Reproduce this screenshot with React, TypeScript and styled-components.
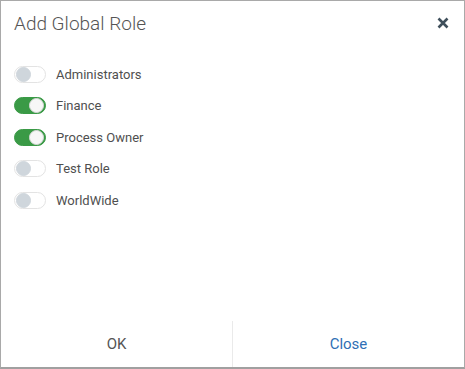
import React, { useState } from "react";
import styled, { createGlobalStyle } from "styled-components";

const GlobalStyle = createGlobalStyle`
  html, body {
    margin: 0;
    padding: 0;
    background: #ffffff;
  }
  body {
    font-family: Roboto, "Liberation Sans", Arial, sans-serif;
  }
`;

interface Role {
  name: string;
  enabled: boolean;
}

const initialRoles: Role[] = [
  { name: "Administrators", enabled: false },
  { name: "Finance", enabled: true },
  { name: "Process Owner", enabled: true },
  { name: "Test Role", enabled: false },
  { name: "WorldWide", enabled: false },
];

export default function App() {
  const [roles, setRoles] = useState<Role[]>(initialRoles);

  const toggle = (idx: number) => {
    setRoles(rs => rs.map((r, i) => (i === idx ? { ...r, enabled: !r.enabled } : r)));
  };

  return (
    <>
      <GlobalStyle />
      <Dialog>
        <Header>
          <Title>Add Global Role</Title>
          <CloseIcon aria-label="close">
            <svg width="12" height="12" viewBox="0 0 12 12">
              <path d="M1.5 1.5 L10.5 10.5 M10.5 1.5 L1.5 10.5" stroke="#3f4f5b" strokeWidth="2.6" strokeLinecap="butt" />
            </svg>
          </CloseIcon>
        </Header>
        <Body>
          {roles.map((role, i) => (
            <RoleRow key={role.name} onClick={() => toggle(i)}>
              <Switch $on={role.enabled}>
                <Knob $on={role.enabled} />
              </Switch>
              <RoleLabel>{role.name}</RoleLabel>
            </RoleRow>
          ))}
        </Body>
        <Footer>
          <FooterButton>OK</FooterButton>
          <FooterButton $primary>Close</FooterButton>
        </Footer>
      </Dialog>
    </>
  );
}

const Dialog = styled.div`
  width: 465px;
  height: 369px;
  box-sizing: border-box;
  border: 1px solid #a9a9a9;
  border-bottom: 2px solid #a0a0a0;
  display: flex;
  flex-direction: column;
  background: #fff;
`;

const Header = styled.div`
  display: flex;
  align-items: center;
  justify-content: space-between;
  height: 44px;
  padding: 0 15px 0 13px;
`;

const Title = styled.div`
  font-size: 19px;
  color: #555555;
  font-weight: 300;
`;

const CloseIcon = styled.div`
  display: flex;
  align-items: center;
  cursor: pointer;
`;

const Body = styled.div`
  flex: 1;
  display: flex;
  flex-direction: column;
  padding: 21px 13px 0 13px;
  gap: 15.6px;
`;

const RoleRow = styled.div`
  display: flex;
  align-items: center;
  gap: 10px;
  height: 16px;
  cursor: pointer;
`;

const Switch = styled.div<{ $on: boolean }>`
  width: 32px;
  height: 17px;
  box-sizing: border-box;
  border-radius: 9px;
  border: 1px solid ${p => (p.$on ? "#3a9a46" : "#e3e3e3")};
  background: ${p => (p.$on ? "#3a9a46" : "#ffffff")};
  display: flex;
  align-items: center;
  justify-content: ${p => (p.$on ? "flex-end" : "flex-start")};
  padding: 0 1px;
`;

const Knob = styled.div<{ $on: boolean }>`
  width: 15px;
  height: 15px;
  box-sizing: border-box;
  border-radius: 50%;
  background: ${p => (p.$on ? "#f7f7f7" : "#cfd6dc")};
  border: 1px solid ${p => (p.$on ? "#d8d8d8" : "#cfd6dc")};
`;

const RoleLabel = styled.span`
  font-size: 13px;
  color: #4f4f4f;
`;

const Footer = styled.div`
  display: flex;
  height: 46px;
`;

const FooterButton = styled.button<{ $primary?: boolean }>`
  flex: 1;
  border: none;
  background: #fff;
  font-family: Roboto, "Liberation Sans", Arial, sans-serif;
  font-size: 15px;
  color: ${p => (p.$primary ? "#2f6fb5" : "#555555")};
  cursor: pointer;
  padding: 0;

  & + & {
    border-left: 1px solid #eaeaea;
  }
`;
